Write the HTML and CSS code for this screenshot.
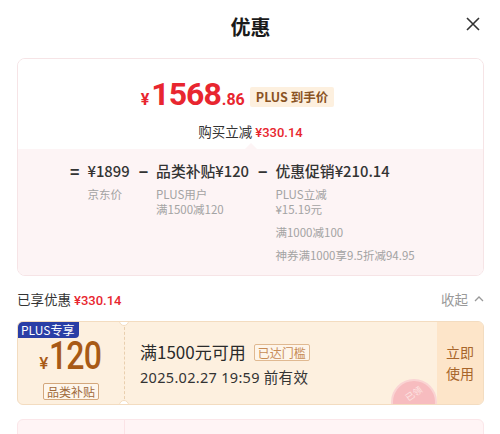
FILE: index.html
```html
<!DOCTYPE html>
<html lang="zh-CN">
<head>
    <meta charset="UTF-8">
    <title>优惠</title>
    <link rel="stylesheet" href="styles.css">
</head>
<body>
    <div class="sheet">
        <div class="sheet-header">
            <h1>优惠</h1>
            <button class="close-button" aria-label="关闭">
                <svg width="16" height="16" viewBox="0 0 16 16"><path d="M2 2L14 14M14 2L2 14" stroke="#333" stroke-width="1.6" fill="none"/></svg>
            </button>
        </div>

        <div class="summary">
            <div class="summary-top">
                <div class="final-price">
                    <span class="price-main"><span class="yen">¥</span>1568<span class="cents">.86</span></span>
                    <span class="plus-badge">PLUS 到手价</span>
                </div>
                <div class="saving">购买立减 <span class="red">¥330.14</span></div>
            </div>
            <div class="summary-bottom">
                <div class="formula">
                    <div class="op">=</div>
                    <div class="term">
                        <div class="term-value">¥1899</div>
                        <div class="term-note">京东价</div>
                    </div>
                    <div class="op">−</div>
                    <div class="term">
                        <div class="term-value">品类补贴¥120</div>
                        <div class="term-note">PLUS用户<br>满1500减120</div>
                    </div>
                    <div class="op">−</div>
                    <div class="term">
                        <div class="term-value">优惠促销¥210.14</div>
                        <div class="term-note">PLUS立减<br>¥15.19元</div>
                        <div class="term-note">满1000减100</div>
                        <div class="term-note">神券满1000享9.5折减94.95</div>
                    </div>
                </div>
            </div>
        </div>

        <div class="enjoyed-row">
            <div class="enjoyed">已享优惠 <span class="red">¥330.14</span></div>
            <div class="collapse">收起
                <svg width="10" height="7" viewBox="0 0 10 7"><path d="M1 6L5 2L9 6" stroke="#999" stroke-width="1.3" fill="none"/></svg>
            </div>
        </div>

        <div class="coupon">
            <div class="coupon-left">
                <span class="coupon-tag">PLUS专享</span>
                <div class="coupon-amount"><span class="yen">¥</span><span class="digits">120</span></div>
                <span class="coupon-type">品类补贴</span>
            </div>
            <div class="coupon-body">
                <div class="coupon-title">满1500元可用 <span class="reached">已达门槛</span></div>
                <div class="coupon-date">2025.02.27 19:59 前有效</div>
                <div class="stamp"><span>已领</span></div>
            </div>
            <div class="coupon-action">立即<br>使用</div>
        </div>

        <div class="coupon coupon-pink">
            <div class="coupon-left"></div>
            <div class="coupon-body"></div>
        </div>
    </div>
</body>
</html>
```

FILE: styles.css
```css
body {
    margin: 0;
    background-color: #ffffff;
    font-family: "Noto Sans CJK SC", "Noto Sans", sans-serif;
    color: #222222;
}

.sheet {
    padding: 0 16px 0 17px;
    overflow: hidden;
    height: 434px;
}

.sheet-header {
    position: relative;
    height: 54px;
    display: flex;
    align-items: center;
    justify-content: center;
}

.sheet-header h1 {
    margin: 0;
    font-size: 20px;
    font-weight: bold;
    color: #1a1a1a;
    line-height: 1;
}

.close-button {
    position: absolute;
    right: 2px;
    top: 16px;
    border: none;
    background: none;
    padding: 0;
    width: 18px;
    height: 18px;
}

/* price summary card */
.summary {
    margin-top: 4px;
    border: 1px solid #f6e4e6;
    border-radius: 8px;
    overflow: hidden;
}

.summary-top {
    background-color: #ffffff;
    height: 90px;
    display: flex;
    flex-direction: column;
    align-items: center;
    padding-top: 19px;
    box-sizing: border-box;
}

.final-price {
    display: flex;
    align-items: center;
    gap: 5px;
    margin-right: 26px;
}

.price-main {
    font-family: Roboto, sans-serif;
    font-weight: bold;
    color: #e8262f;
    font-size: 32px;
    line-height: 32px;
    letter-spacing: -1px;
}

.price-main .yen {
    font-size: 16px;
    margin-right: 2px;
    letter-spacing: 0;
}

.price-main .cents {
    font-size: 16px;
    margin-left: 1px;
    letter-spacing: 0;
}

.plus-badge {
    background-color: #fdf0df;
    color: #8a5323;
    font-size: 12.5px;
    font-weight: bold;
    padding: 1px 6px;
    border-radius: 2px;
    line-height: 18px;
}

.saving {
    margin-top: 5px;
    font-size: 13.5px;
    color: #333333;
}

.red {
    color: #e8262f;
    font-family: Roboto, sans-serif;
    font-weight: 500;
    font-size: 13px;
}

.summary-bottom {
    position: relative;
    background-color: #fdf4f5;
    height: 126px;
    padding: 11px 0 0 52px;
    box-sizing: border-box;
}

.summary-bottom::before {
    content: "";
    position: absolute;
    left: 227px;
    top: -6px;
    border-left: 6px solid transparent;
    border-right: 6px solid transparent;
    border-bottom: 6px solid #fdf4f5;
}

.formula {
    display: flex;
    align-items: flex-start;
}

.op {
    font-size: 16px;
    font-weight: bold;
    color: #333333;
    line-height: 22px;
    margin-right: 8px;
}

.term {
    margin-right: 9px;
}

.term-value {
    font-size: 14.8px;
    font-weight: 500;
    color: #333333;
    line-height: 22px;
    margin-bottom: 5px;
    white-space: nowrap;
}

.term-note {
    font-size: 11.5px;
    color: #a3a3a3;
    line-height: 15px;
    margin-bottom: 8px;
    white-space: nowrap;
}

/* enjoyed row */
.enjoyed-row {
    display: flex;
    justify-content: space-between;
    align-items: center;
    height: 45px;
}

.enjoyed {
    font-size: 13.5px;
    color: #333333;
}

.collapse {
    font-size: 13.5px;
    color: #9a9a9a;
    display: flex;
    align-items: center;
    gap: 6px;
}

/* coupon cards */
.coupon {
    position: relative;
    display: flex;
    height: 82px;
    background-color: #fdf0df;
    border: 1px solid #f3dcc0;
    border-radius: 6px;
    overflow: hidden;
}

.coupon-left {
    position: relative;
    width: 107px;
    border-right: 1px dashed #e9cfae;
    display: flex;
    flex-direction: column;
    align-items: center;
    padding-top: 19px;
    box-sizing: border-box;
}

.coupon-left::before,
.coupon-left::after {
    content: "";
    position: absolute;
    right: -5px;
    width: 8px;
    height: 8px;
    border-radius: 50%;
    background-color: #ffffff;
    border: 1px solid #f3dcc0;
}

.coupon-left::before {
    top: -6px;
}

.coupon-left::after {
    bottom: -6px;
}

.coupon-tag {
    position: absolute;
    left: 0;
    top: 0;
    background-color: #2a3ea6;
    color: #ffffff;
    font-size: 12px;
    line-height: 16px;
    padding: 0 5px 0 3px;
    border-bottom-right-radius: 4px;
}

.coupon-amount {
    font-family: Roboto, sans-serif;
    font-weight: 500;
    color: #a85a16;
    display: flex;
    align-items: baseline;
    line-height: 30px;
}

.coupon-amount .yen {
    font-size: 17px;
    margin-right: 1px;
}

.coupon-amount .digits {
    display: inline-block;
    font-size: 39px;
    letter-spacing: -1px;
    transform: scaleX(0.82);
    transform-origin: left center;
    margin-right: -10px;
}

.coupon-type {
    margin-top: 5px;
    border: 1px solid #d3a77c;
    color: #a0693a;
    font-size: 12px;
    line-height: 15px;
    padding: 0 3px;
    border-radius: 2px;
    background-color: #fef6ec;
}

.coupon-body {
    position: relative;
    flex: 1;
    padding: 19px 0 0 15px;
}

.coupon-title {
    font-size: 17px;
    color: #2a2a2a;
    display: flex;
    align-items: center;
    gap: 8px;
    line-height: 22px;
}

.reached {
    border: 1px solid #e0b991;
    color: #c78b55;
    background-color: #fef5ea;
    font-size: 12px;
    line-height: 15px;
    padding: 0 3px;
    border-radius: 2px;
}

.coupon-date {
    margin-top: 3px;
    font-size: 14.5px;
    letter-spacing: 0.3px;
    color: #333333;
    font-family: "Noto Sans", "Noto Sans CJK SC", sans-serif;
}

.stamp {
    position: absolute;
    right: 0;
    top: 57px;
    width: 42px;
    height: 42px;
    border-radius: 50%;
    background-color: #f6b3ba;
    border: 2px solid #f9cfd2;
    display: flex;
    align-items: flex-start;
    justify-content: center;
    opacity: 0.85;
}

.stamp span {
    color: #fde3e5;
    font-size: 9px;
    line-height: 10px;
    margin-top: 8px;
    transform: rotate(-35deg);
}

.coupon-action {
    width: 46px;
    background-color: #fde5c9;
    color: #a8652a;
    font-size: 14px;
    line-height: 21px;
    display: flex;
    align-items: center;
    justify-content: center;
    text-align: center;
}

.coupon-pink {
    margin-top: 14px;
    background-color: #fff4f5;
    border-color: #fbe6e9;
}

.coupon-pink .coupon-left {
    border-right: 1px solid #fbe3e6;
}

.coupon-pink .coupon-left::before,
.coupon-pink .coupon-left::after {
    display: none;
}
```
